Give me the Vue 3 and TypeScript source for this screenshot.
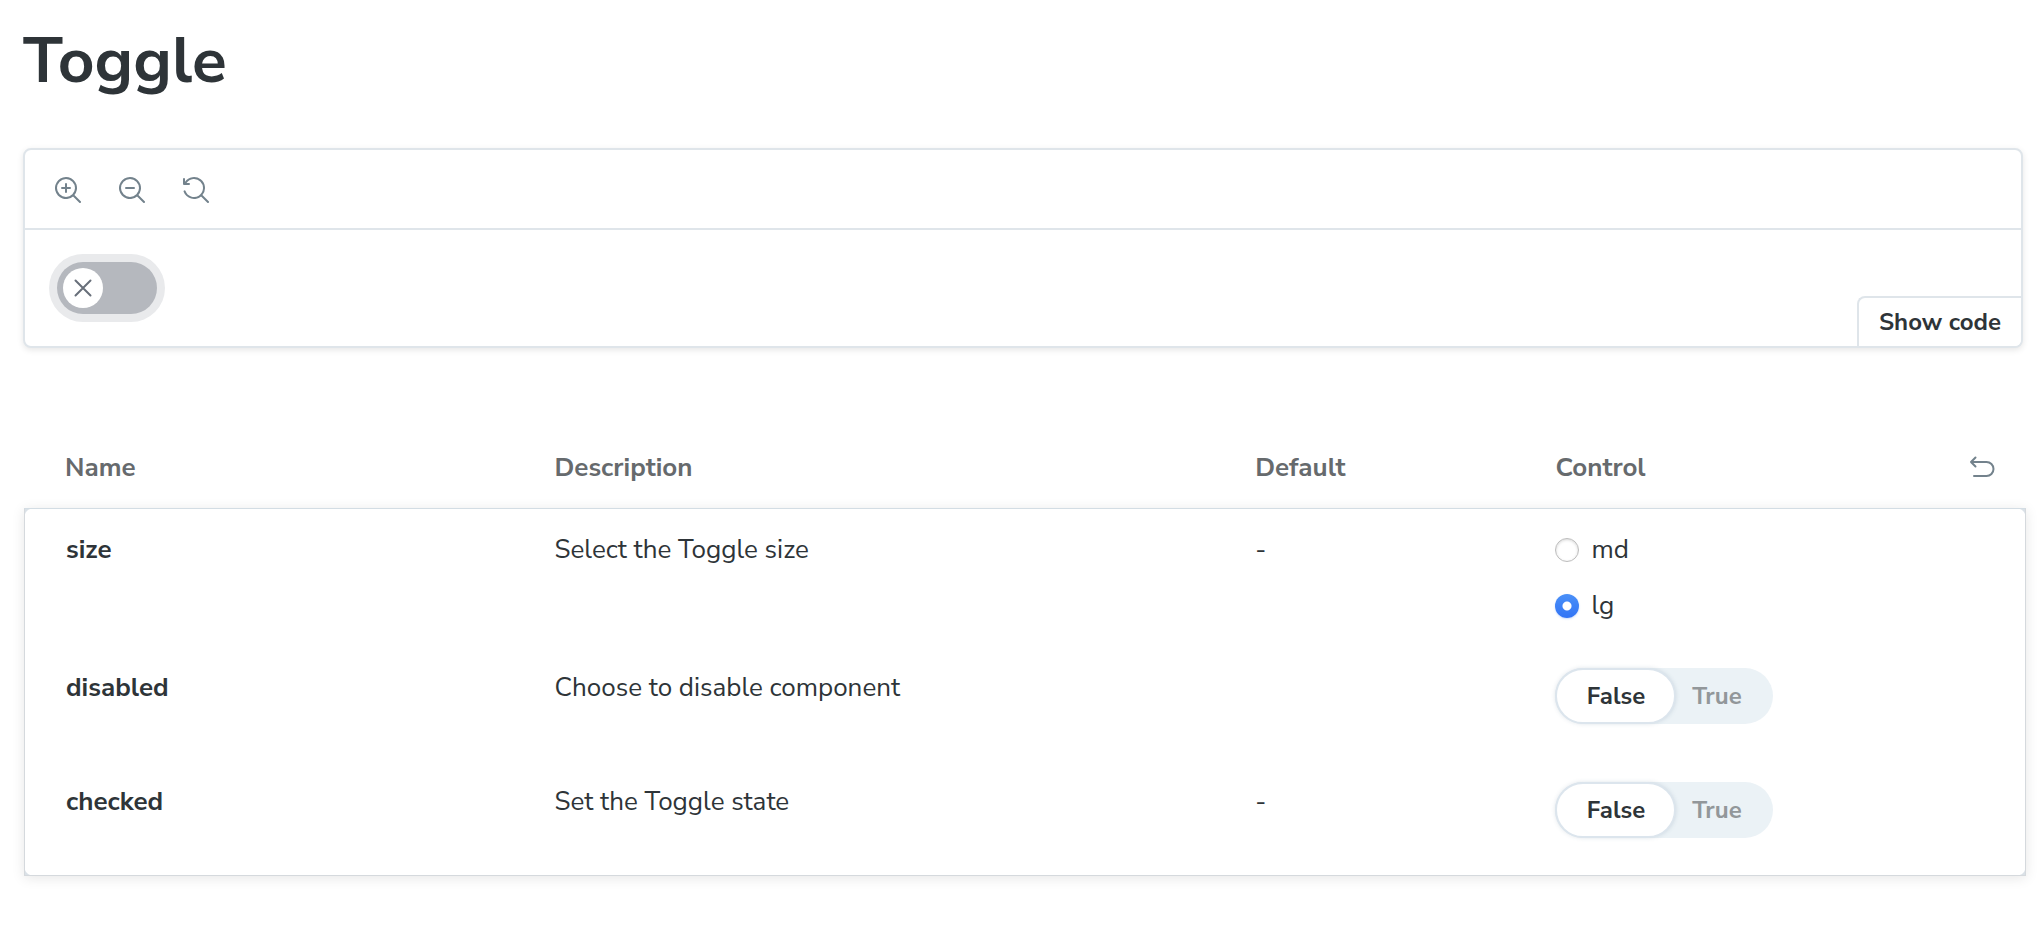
<script setup lang="ts">
import { reactive, ref } from 'vue'

type Size = 'md' | 'lg'
interface ArgRow {
  name: 'size' | 'disabled' | 'checked'
  description: string
  fallback: string
}

const rows: ArgRow[] = [
  { name: 'size', description: 'Select the Toggle size', fallback: '-' },
  { name: 'disabled', description: 'Choose to disable component', fallback: '' },
  { name: 'checked', description: 'Set the Toggle state', fallback: '-' },
]
const sizes: Size[] = ['md', 'lg']

const args = reactive({ size: 'lg' as Size, disabled: false, checked: false })
const zoom = ref(1)
const codeOpen = ref(false)

function reset(): void {
  args.size = 'lg'
  args.disabled = false
  args.checked = false
}
</script>

<template>
  <main class="page">
    <h1>Toggle</h1>

    <section class="preview" aria-label="Preview">
      <div class="toolbar">
        <button type="button" class="icon-button" aria-label="Zoom in" @click="zoom += 0.25">
          <svg viewBox="0 0 14 14" aria-hidden="true">
            <path d="M6 3.5a.5.5 0 01.5.5v1.5H8a.5.5 0 010 1H6.5V8a.5.5 0 01-1 0V6.5H4a.5.5 0 010-1h1.5V4a.5.5 0 01.5-.5z" />
            <path fill-rule="evenodd" d="M9.544 10.206a5.5 5.5 0 11.662-.662.5.5 0 01.148.102l3 3a.5.5 0 01-.708.708l-3-3a.5.5 0 01-.102-.148zM10.5 6a4.5 4.5 0 10-9 0 4.5 4.5 0 009 0z" />
          </svg>
        </button>
        <button type="button" class="icon-button" aria-label="Zoom out" @click="zoom = Math.max(0.5, zoom - 0.25)">
          <svg viewBox="0 0 14 14" aria-hidden="true">
            <path d="M4 5.5a.5.5 0 000 1h4a.5.5 0 000-1H4z" />
            <path fill-rule="evenodd" d="M9.544 10.206a5.5 5.5 0 11.662-.662.5.5 0 01.148.102l3 3a.5.5 0 01-.708.708l-3-3a.5.5 0 01-.102-.148zM10.5 6a4.5 4.5 0 10-9 0 4.5 4.5 0 009 0z" />
          </svg>
        </button>
        <button type="button" class="icon-button" aria-label="Reset zoom" @click="zoom = 1">
          <svg viewBox="0 0 14 14" aria-hidden="true">
            <path d="M1.5 2.837V1.5a.5.5 0 00-1 0V4a.5.5 0 00.5.5h2.5a.5.5 0 000-1H2.258a4.5 4.5 0 11-.496 4.016.5.5 0 10-.942.337 5.502 5.502 0 008.724 2.353.5.5 0 00.102.148l3 3a.5.5 0 00.708-.708l-3-3a.5.5 0 00-.148-.102A5.5 5.5 0 101.5 2.837z" />
          </svg>
        </button>
      </div>
      <div class="stage">
        <button
          type="button"
          role="switch"
          class="toggle"
          :class="[args.size, { on: args.checked }]"
          :style="{ zoom }"
          :aria-checked="args.checked"
          :disabled="args.disabled"
          aria-label="Toggle"
          @click="args.checked = !args.checked"
        >
          <span class="knob">
            <svg viewBox="0 0 20 20" aria-hidden="true">
              <path v-if="args.checked" d="M2.500 10.500l5 5 10-11" />
              <path v-else d="M2.500 2.500l15 15M17.500 2.500l-15 15" />
            </svg>
          </span>
        </button>
        <button type="button" class="show-code" :aria-expanded="codeOpen" @click="codeOpen = !codeOpen">
          Show code
        </button>
      </div>
    </section>

    <table class="args">
      <colgroup>
        <col class="col-name" />
        <col class="col-description" />
        <col class="col-default" />
        <col class="col-control" />
      </colgroup>
      <thead>
        <tr>
          <th scope="col">Name</th>
          <th scope="col">Description</th>
          <th scope="col">Default</th>
          <th scope="col">
            <div class="control-head">
              <span>Control</span>
              <button type="button" class="icon-button" aria-label="Reset controls" @click="reset">
                <svg viewBox="0 0 28 28" class="undo" aria-hidden="true">
                  <path d="M7.500 3.500l-4.500 4.500 4.500 4.500M3 8h15.500a7 7 0 010 14H6" />
                </svg>
              </button>
            </div>
          </th>
        </tr>
      </thead>
      <tbody>
        <tr v-for="row in rows" :key="row.name">
          <td class="name">{{ row.name }}</td>
          <td>{{ row.description }}</td>
          <td>{{ row.fallback }}</td>
          <td>
            <div v-if="row.name === 'size'" class="radios" role="radiogroup" aria-label="size">
              <label v-for="size in sizes" :key="size">
                <input v-model="args.size" type="radio" name="size" :value="size" />
                <span>{{ size }}</span>
              </label>
            </div>
            <label v-else class="boolean">
              <input v-model="args[row.name]" type="checkbox" role="switch" :aria-label="row.name" />
              <span class="option off">False</span>
              <span class="option yes">True</span>
            </label>
          </td>
        </tr>
      </tbody>
    </table>
  </main>
</template>

<style>
body {
  margin: 0;
  background: #fff;
}
</style>

<style scoped>
.page {
  padding: 21px 18px 48px 23px;
  color: #2e3438;
  font-family: "Nunito Sans", Lato, "Open Sans", sans-serif;
  font-size: 26px;
  line-height: 40px;
}

.page *,
.page {
  box-sizing: border-box;
}

button {
  padding: 0;
  border: 0;
  background: none;
  color: inherit;
  font: inherit;
  cursor: pointer;
}

h1 {
  margin: 0 0 47px;
  font-size: 64px;
  font-weight: 700;
  line-height: 80px;
}

.preview {
  margin-right: 3px;
  border: 2px solid #dfe5ea;
  border-radius: 8px;
  background: #fff;
  box-shadow: 0 2px 6px rgba(0, 0, 0, 0.1);
}

.toolbar {
  display: flex;
  gap: 36px;
  padding: 26px 29px 24px;
  border-bottom: 2px solid #dfe5ea;
}

.icon-button {
  display: block;
  width: 28px;
  height: 28px;
}

.icon-button svg {
  display: block;
  fill: #73828c;
}

.icon-button .undo {
  fill: none;
  stroke: #73828c;
  stroke-width: 2;
  stroke-linecap: round;
  stroke-linejoin: round;
}

.stage {
  position: relative;
  padding: 32px;
}

.toggle {
  display: flex;
  width: 100px;
  height: 52px;
  padding: 6px;
  border-radius: 26px;
  background: #b5b8be;
  box-shadow: 0 0 0 8px #e9eaec;
}

.toggle.md {
  width: 80px;
  height: 44px;
}

.toggle.on {
  justify-content: flex-end;
  background: #3a7bf6;
}

.knob {
  display: grid;
  place-items: center;
  height: 100%;
  aspect-ratio: 1;
  border-radius: 50%;
  background: #fff;
}

.knob svg {
  width: 20px;
  height: 20px;
  fill: none;
  stroke: #686f7a;
  stroke-width: 2;
  stroke-linecap: round;
}

.show-code {
  position: absolute;
  right: 0;
  bottom: 0;
  height: 50px;
  padding: 0 20px;
  border: solid #dfe5ea;
  border-width: 2px 0 0 2px;
  border-radius: 8px 0 6px 0;
  background: #fff;
  font-size: 24px;
  font-weight: 700;
  line-height: 48px;
}

.args {
  width: calc(100% - 1px);
  margin: 80px 0 0 1px;
  border-collapse: separate;
  border-spacing: 0;
  table-layout: fixed;
  text-align: left;
}

.col-name,
.col-control {
  width: 25%;
}

.col-description {
  width: 35%;
}

.col-default {
  width: 15%;
}

th {
  padding: 20px 30px;
  color: #666a6d;
  font-weight: 700;
}

th:first-child,
td:first-child {
  padding-left: 41px;
}

.control-head {
  display: flex;
  align-items: center;
  justify-content: space-between;
}

tbody {
  box-shadow: 0 2px 12px rgba(0, 0, 0, 0.1);
}

td {
  padding: 21px 30px;
  background: #fff;
  vertical-align: top;
}

td:first-child {
  border-left: 1px solid #d5d9dd;
}

td:last-child {
  border-right: 1px solid #d5d9dd;
}

tbody tr:first-child td {
  border-top: 1px solid #d3dde4;
}

tbody tr:last-child td {
  border-bottom: 1px solid #d5d9dd;
}

tbody tr:first-child td:first-child {
  background: radial-gradient(circle at 8px 8px, #fff 8px, #dae1e7 9px) left top / 8px 8px no-repeat #fff;
}

tbody tr:first-child td:last-child {
  background: radial-gradient(circle at 0 8px, #fff 8px, #dae1e7 9px) right top / 8px 8px no-repeat #fff;
}

tbody tr:last-child td:first-child {
  background: radial-gradient(circle at 8px 0, #fff 8px, #dae1e7 9px) left bottom / 8px 8px no-repeat #fff;
}

tbody tr:last-child td:last-child {
  background: radial-gradient(circle at 0 0, #fff 8px, #dae1e7 9px) right bottom / 8px 8px no-repeat #fff;
}

.name {
  font-weight: 700;
}

.radios {
  display: flex;
  flex-direction: column;
  align-items: flex-start;
  gap: 16px;
}

.radios label {
  display: flex;
  align-items: center;
  gap: 12px;
}

.radios input {
  appearance: none;
  width: 24px;
  height: 24px;
  margin: 0;
  border: 1px solid #bcbcbc;
  border-radius: 50%;
  background: #fff;
  box-shadow: inset 0 1px 3px rgba(0, 0, 0, 0.16);
}

.radios input:checked {
  border: 0;
  background: radial-gradient(circle, #fff 4px, transparent 5px), linear-gradient(#4a90f8, #3274f5);
  box-shadow: 0 1px 2px rgba(50, 116, 245, 0.25);
}

.boolean {
  display: inline-flex;
  height: 56px;
  margin-bottom: 16px;
  border-radius: 28px;
  background: #ebf2f6;
  font-size: 24px;
  font-weight: 700;
  line-height: 56px;
  vertical-align: top;
  cursor: pointer;
}

.boolean input {
  appearance: none;
  width: 0;
  height: 0;
  margin: 0;
}

.option {
  color: #92979a;
  text-align: center;
}

.off {
  width: 121px;
}

.yes {
  width: 97px;
  padding-right: 16px;
}

.boolean input:not(:checked) ~ .off,
.boolean input:checked ~ .yes {
  border: 2px solid #dce5ed;
  border-radius: 28px;
  background: #fff;
  box-shadow: 0 0 4px rgba(80, 110, 140, 0.18);
  color: #2e3438;
  line-height: 52px;
}

.boolean input:checked ~ .yes {
  padding-right: 0;
}
</style>
